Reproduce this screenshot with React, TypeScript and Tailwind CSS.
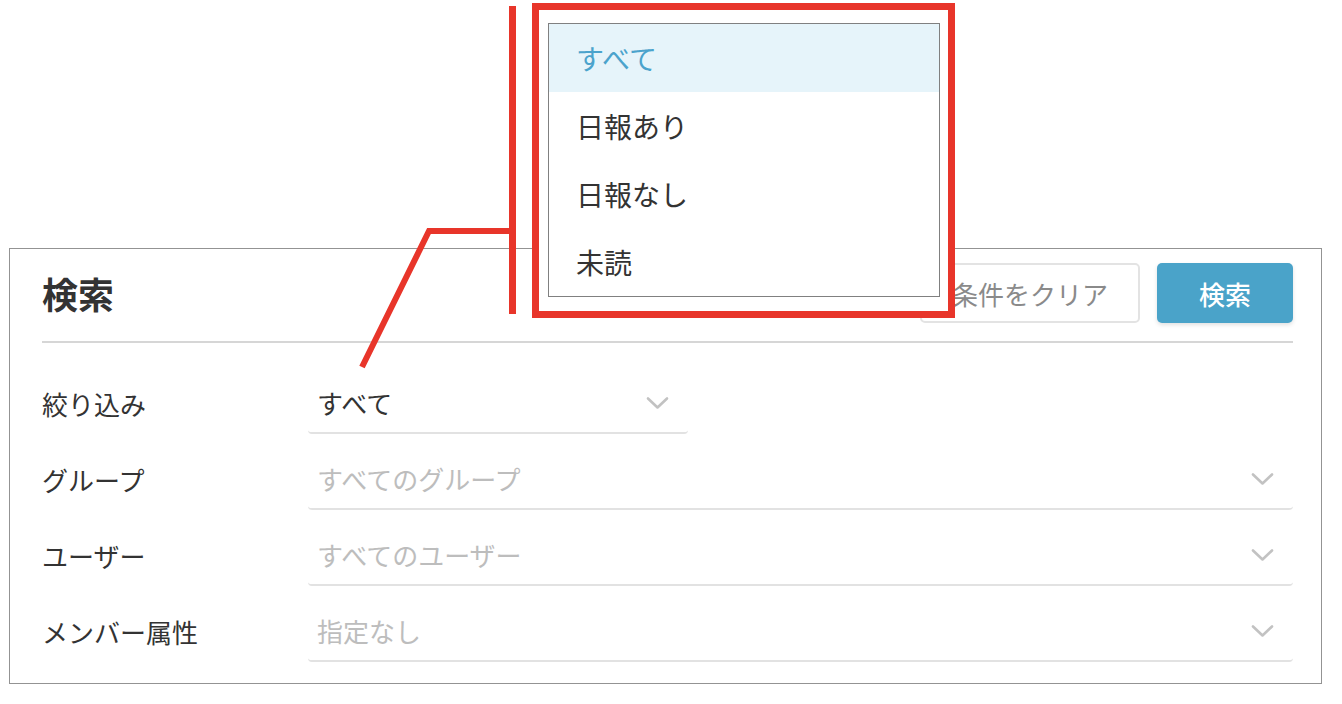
const font = {
  fontFamily: '"Noto Sans CJK JP", "Noto Sans", sans-serif',
};

type FieldRow = {
  label: string;
  value: string;
  placeholder?: boolean;
  narrow?: boolean;
};

const rows: FieldRow[] = [
  { label: "絞り込み", value: "すべて", narrow: true },
  { label: "グループ", value: "すべてのグループ", placeholder: true },
  { label: "ユーザー", value: "すべてのユーザー", placeholder: true },
  { label: "メンバー属性", value: "指定なし", placeholder: true },
];

const options = ["すべて", "日報あり", "日報なし", "未読"];

function Chevron() {
  return (
    <svg width={23} height={14} viewBox="0 0 23 14" className="text-[#c2c2c2]">
      <path
        d="M2 2.5 L11.5 11.5 L21 2.5"
        fill="none"
        stroke="currentColor"
        strokeWidth={2.6}
        strokeLinecap="round"
        strokeLinejoin="round"
      />
    </svg>
  );
}

function SelectField({ value, placeholder, narrow }: FieldRow) {
  return (
    <div
      className={`flex h-[60px] items-center justify-between rounded-[4px] border-b-2 border-[#e2e2e2] pl-[9px] pr-[19px] ${
        narrow ? "w-[380px]" : "flex-1"
      }`}
    >
      <span
        className={`text-[26px] leading-none ${
          placeholder ? "text-[#bdbdbd]" : "text-[#333333]"
        }`}
      >
        {value}
      </span>
      <Chevron />
    </div>
  );
}

export default function App() {
  return (
    <div className="relative h-[704px] w-[1342px] overflow-hidden bg-white" style={font}>
      <div className="ml-[9px] mt-[248px] w-[1313px] border border-[#939393] pb-[21px] pl-[32px] pr-[28px] pt-[14px]">
        <div className="flex h-[60px] items-center justify-between">
          <h1 className="text-[36px] font-bold leading-none text-[#333333]">検索</h1>
          <div className="flex gap-[17px]">
            <button className="h-[60px] w-[220px] rounded-[5px] border-2 border-[#e3e3e3] bg-white text-[26px] text-[#8a8a8a]">
              条件をクリア
            </button>
            <button className="h-[60px] w-[136px] rounded-[5px] bg-[#4aa3c9] text-[26px] font-medium text-white shadow-[0_2px_4px_rgba(0,0,0,0.12)]">
              検索
            </button>
          </div>
        </div>
        <div className="mt-[18px] border-t-2 border-[#d6d6d6]" />
        <div className="mt-[31px] flex flex-col gap-[16px]">
          {rows.map((row) => (
            <div key={row.label} className="flex items-center">
              <div className="w-[266px] text-[26px] leading-none text-[#333333]">
                {row.label}
              </div>
              <SelectField {...row} />
            </div>
          ))}
        </div>
      </div>

      {/* annotation callout lines */}
      <svg
        className="absolute left-0 top-0"
        width={1342}
        height={704}
        viewBox="0 0 1342 704"
      >
        <line x1={512.5} y1={6} x2={512.5} y2={314} stroke="#e8352a" strokeWidth={7} />
        <polyline
          points="516,231 429,231 362,367"
          fill="none"
          stroke="#e8352a"
          strokeWidth={6}
        />
      </svg>

      {/* open dropdown, highlighted */}
      <div className="absolute left-[532px] top-[3px] w-[423px] border-[7px] border-[#e8352a] bg-white pb-[14px] pl-[9px] pr-[8px] pt-[13px]">
        <ul className="border border-[#808080] bg-white">
          {options.map((opt, i) => (
            <li
              key={opt}
              className={`flex h-[68px] items-center pl-[27px] text-[28px] leading-none ${
                i === 0 ? "bg-[#e6f4fa] text-[#4ba3cc]" : "text-[#333333]"
              }`}
            >
              {opt}
            </li>
          ))}
        </ul>
      </div>
    </div>
  );
}
